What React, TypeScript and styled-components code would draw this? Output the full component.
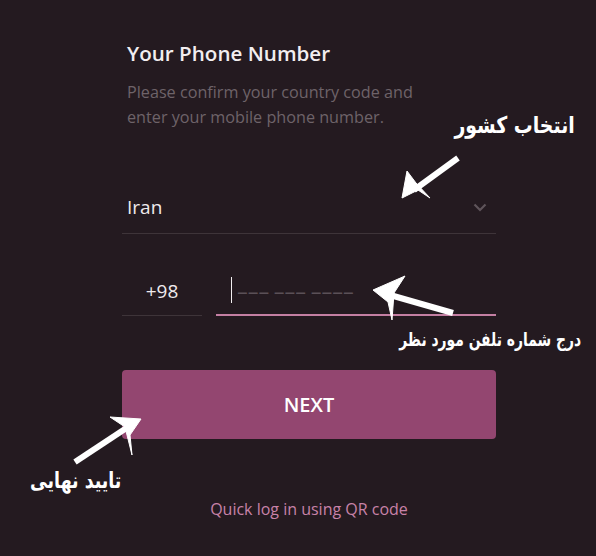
import styled, { createGlobalStyle } from "styled-components";

const GlobalStyle = createGlobalStyle`
  html, body {
    margin: 0;
    padding: 0;
    background: #241a20;
  }
`;

const Page = styled.div`
  position: relative;
  width: 596px;
  height: 556px;
  background: #241a20;
  font-family: "Open Sans", "Noto Sans", sans-serif;
  overflow: hidden;
`;

const Form = styled.div`
  width: 374px;
  margin-left: 122px;
  padding-top: 40px;
  display: flex;
  flex-direction: column;
`;

const Title = styled.h1`
  margin: 0;
  padding-left: 5px;
  font-size: 20.6px;
  line-height: 26px;
  font-weight: 600;
  color: #f2eef0;
`;

const Description = styled.p`
  margin: 14px 0 0;
  padding-left: 5px;
  font-size: 16.2px;
  line-height: 25px;
  color: #6e6369;
`;

const Select = styled.div`
  margin-top: 55px;
  height: 49px;
  display: flex;
  align-items: center;
  justify-content: space-between;
  padding: 0 9px 4px 5px;
  box-sizing: border-box;
  border-bottom: 1px solid #3e3439;
  font-size: 19px;
  color: #efeaed;
`;

const PhoneRow = styled.div`
  margin-top: 32px;
  display: grid;
  grid-template-columns: 80px 1fr;
  gap: 14px;
  height: 50px;
`;

const Field = styled.div<{ active?: boolean }>`
  display: flex;
  align-items: center;
  justify-content: ${(p) => (p.active ? "flex-start" : "center")};
  padding-left: ${(p) => (p.active ? "15px" : "0")};
  border-bottom: ${(p) => (p.active ? "2px solid #c47fa3" : "1px solid #3e3439")};
  font-size: 19px;
  color: #efeaed;
`;

const Caret = styled.span`
  width: 1px;
  height: 26px;
  background: #f2eef0;
  margin-right: 5px;
`;

const Placeholder = styled.span`
  font-size: 21.5px;
  color: #5b5057;
  word-spacing: -1px;
`;

const NextButton = styled.button`
  margin-top: 54px;
  height: 69px;
  border: none;
  border-radius: 4px;
  background: #934670;
  color: #ffffff;
  font-family: "Open Sans", sans-serif;
  font-size: 20px;
  font-weight: 600;
  cursor: pointer;
`;

const QrLink = styled.a`
  margin-top: 58px;
  text-align: center;
  font-size: 16px;
  line-height: 24px;
  color: #c882a8;
  text-decoration: none;
`;

const Overlay = styled.svg`
  position: absolute;
  inset: 0;
  pointer-events: none;
`;

const Note = styled.div<{ size: number; squeeze: number; anchor: "left" | "right" }>`
  position: absolute;
  direction: rtl;
  font-family: "DejaVu Sans", sans-serif;
  font-weight: 700;
  font-size: ${(p) => p.size}px;
  line-height: 1;
  color: #ffffff;
  white-space: nowrap;
  transform: scaleX(${(p) => p.squeeze});
  transform-origin: ${(p) => p.anchor} center;
`;

const Chevron = () => (
  <svg width="14" height="9" viewBox="0 0 14 9">
    <path d="M1.5 1.5 L7 7 L12.5 1.5" fill="none" stroke="#5f545a" strokeWidth="2.2" />
  </svg>
);

const arrows = [
  // shaft from the tail, then head polygon (tip, wing, notch, wing, notch)
  { shaft: "M458 158 L414 190", head: "402,198 407,171 416,183 430,198 418,190" },
  { shaft: "M453 313 L390 295", head: "373,290 405,276 394,293 392,320 388,302" },
  { shaft: "M75 462 L128 427", head: "141,419 110,417 125,427 132,455 130,435" },
];

export default function App() {
  return (
    <Page>
      <GlobalStyle />
      <Form>
        <Title>Your Phone Number</Title>
        <Description>
          Please confirm your country code and
          <br />
          enter your mobile phone number.
        </Description>
        <Select>
          <span>Iran</span>
          <Chevron />
        </Select>
        <PhoneRow>
          <Field>+98</Field>
          <Field active>
            <Caret />
            <Placeholder>––– ––– ––––</Placeholder>
          </Field>
        </PhoneRow>
        <NextButton>NEXT</NextButton>
        <QrLink href="#">Quick log in using QR code</QrLink>
      </Form>

      <Overlay width="596" height="556" viewBox="0 0 596 556">
        {arrows.map((a, i) => (
          <g key={i} fill="#ffffff" stroke="#ffffff">
            <path d={a.shaft} strokeWidth="6" fill="none" />
            <polygon points={a.head} strokeWidth="1" strokeLinejoin="round" />
          </g>
        ))}
      </Overlay>

      <Note size={23} squeeze={0.82} anchor="right" style={{ right: 21, top: 114 }}>
        انتخاب کشور
      </Note>
      <Note size={19} squeeze={0.73} anchor="right" style={{ right: 15, top: 330 }}>
        درج شماره تلفن مورد نظر
      </Note>
      <Note size={22} squeeze={0.79} anchor="left" style={{ left: 30, top: 470 }}>
        تایید نهایی
      </Note>
    </Page>
  );
}
